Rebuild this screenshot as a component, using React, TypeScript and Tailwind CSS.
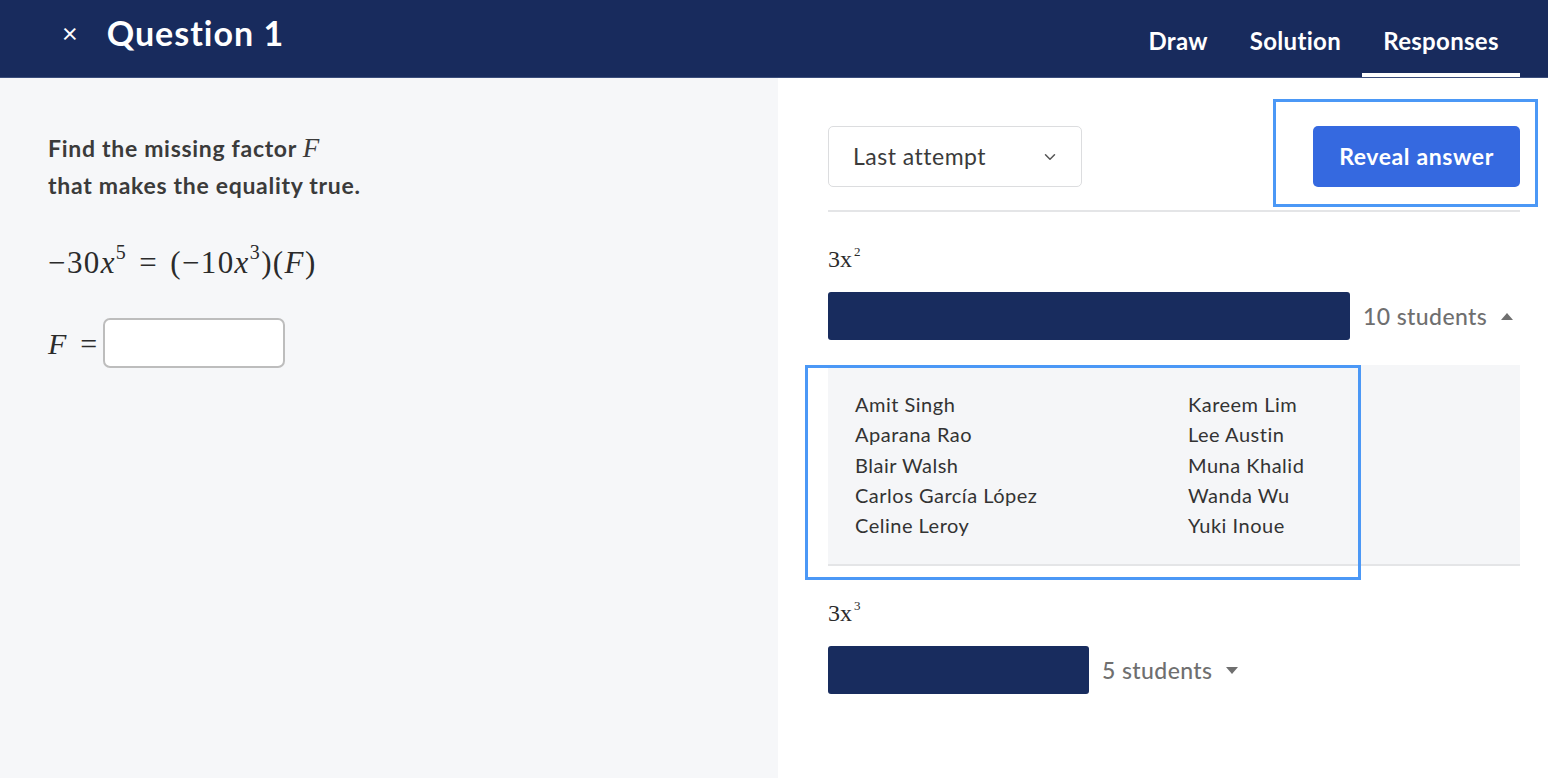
import { ChevronDown } from "lucide-react";

const LATO = { fontFamily: "Lato, 'Open Sans', sans-serif" } as const;
const SERIF = { fontFamily: "'Liberation Serif', 'DejaVu Serif', serif" } as const;

const left = ["Amit Singh", "Aparana Rao", "Blair Walsh", "Carlos García López", "Celine Leroy"];
const right = ["Kareem Lim", "Lee Austin", "Muna Khalid", "Wanda Wu", "Yuki Inoue"];

function Caret({ up }: { up?: boolean }) {
  return (
    <svg width="14" height="9" viewBox="0 0 14 9" className="ml-[13px]">
      {up ? <path d="M7 1 L13 8 L1 8 Z" fill="#6f6f6f" /> : <path d="M1 1 L13 1 L7 8 Z" fill="#6f6f6f" />}
    </svg>
  );
}

function Power({ base, exp }: { base: string; exp: string }) {
  return (
    <div className="text-[24px] leading-none text-[#2b2b2b]" style={SERIF}>
      {base}
      <span className="text-[13px] relative top-[-11px] ml-[2px]">{exp}</span>
    </div>
  );
}

export default function App() {
  return (
    <div className="w-[1548px] h-[778px] flex flex-col overflow-hidden bg-white" style={LATO}>
      {/* Top bar */}
      <header className="h-[78px] bg-[#182b5d] border-b border-[#3b4e7c] flex items-stretch text-white">
        <div className="flex items-center pl-[62px] pb-[12px] gap-[29px]">
          <span className="text-[27px] leading-none">×</span>
          <span className="text-[34px] font-bold leading-none tracking-[1px]">Question 1</span>
        </div>
        <nav className="ml-auto mr-[28px] flex items-stretch text-[24px] font-bold tracking-[0.3px]">
          <div className="px-[21px] flex items-end pb-[18px]">Draw</div>
          <div className="px-[21px] flex items-end pb-[18px]">Solution</div>
          <div className="flex items-end pb-[14px] border-b-4 border-white w-[158px] justify-center">Responses</div>
        </nav>
      </header>

      <div className="flex flex-1">
        {/* Question panel */}
        <section className="w-[778px] bg-[#f6f7f9] pl-[48px] pt-[52px] text-[#3b3b3b]">
          <p className="text-[23px] font-bold leading-[37px] tracking-[0.7px]">
            Find the missing factor{" "}
            <span style={SERIF} className="italic font-normal text-[27px] tracking-normal">
              F
            </span>
            <br />
            that makes the equality true.
          </p>
          <p className="mt-[43px] text-[31px] leading-none text-[#2b2b2b] tracking-[1.4px]" style={SERIF}>
            −30<i>x</i>
            <span className="text-[20px] relative top-[-14px]">5</span>
            <span className="mx-[12px]">=</span>(−10<i>x</i>
            <span className="text-[20px] relative top-[-14px]">3</span>)(<i>F</i>)
          </p>
          <div className="mt-[40px] flex items-center gap-[6px]">
            <span className="text-[30px] text-[#2b2b2b]" style={SERIF}>
              <i>F</i>
              <span className="ml-[14px]">=</span>
            </span>
            <div className="w-[182px] h-[50px] rounded-[7px] border-2 border-[#bdbdbd] bg-white" />
          </div>
        </section>

        {/* Responses panel */}
        <section className="flex-1 pl-[50px] pr-[28px] pt-[48px] text-[#3b3b3b]">
          <div className="flex items-center justify-between pb-[23px] border-b-2 border-[#e4e5e7]">
            <div className="w-[254px] h-[61px] rounded-[5px] border border-[#dcdddf] flex items-center pl-[24px] pr-[22px] justify-between">
              <span className="text-[23px] tracking-[0.5px]">Last attempt</span>
              <ChevronDown size={18} strokeWidth={2} className="text-[#555]" />
            </div>
            <div className="relative">
              <button className="w-[207px] h-[61px] rounded-[5px] bg-[#3569e0] text-white text-[23px] font-bold tracking-[0.6px]">
                Reveal answer
              </button>
              <div className="absolute left-[-40px] top-[-27px] w-[265px] h-[108px] border-[3px] border-[#4b98f6] pointer-events-none" />
            </div>
          </div>

          <div className="pt-[35px]">
            <Power base="3x" exp="2" />
          </div>
          <div className="mt-[21px] flex items-center">
            <div className="w-[522px] h-[48px] rounded-[3px] bg-[#182c5e]" />
            <span className="ml-[13px] text-[23px] text-[#6f6f6f] font-medium tracking-[0.4px]">10 students</span>
            <Caret up />
          </div>

          <div className="relative mt-[25px] bg-[#f5f6f8] border-b-2 border-[#e4e5e7] h-[201px] pt-[24px] pl-[27px] grid grid-cols-[333px_1fr] text-[20px] leading-[30.3px] tracking-[0.5px] text-[#333]">
            <div>
              {left.map((n) => (
                <div key={n}>{n}</div>
              ))}
            </div>
            <div>
              {right.map((n) => (
                <div key={n}>{n}</div>
              ))}
            </div>
            <div className="absolute left-[-23px] top-[0px] w-[556px] h-[215px] border-[3px] border-[#4b98f6] pointer-events-none" />
          </div>

          <div className="pt-[35px]">
            <Power base="3x" exp="3" />
          </div>
          <div className="mt-[21px] flex items-center">
            <div className="w-[261px] h-[48px] rounded-[3px] bg-[#182c5e]" />
            <span className="ml-[13px] text-[23px] text-[#6f6f6f] font-medium tracking-[0.4px]">5 students</span>
            <Caret />
          </div>
        </section>
      </div>
    </div>
  );
}
